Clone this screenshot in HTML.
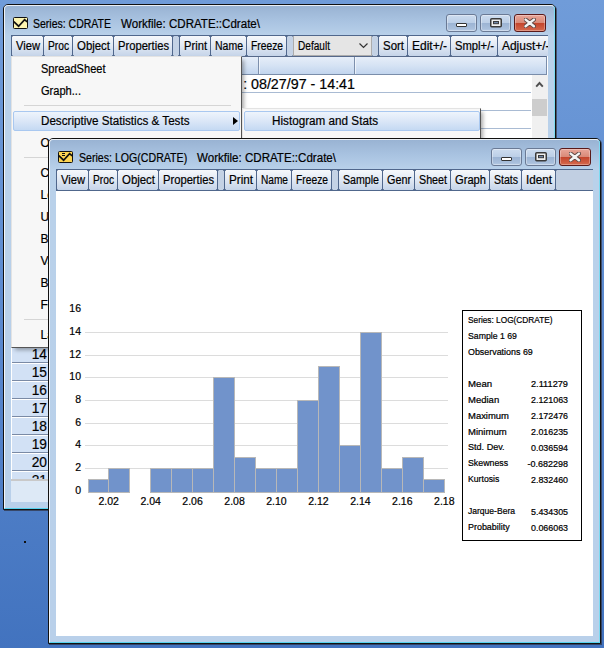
<!DOCTYPE html><html><head><meta charset="utf-8"><style>
*{margin:0;padding:0;box-sizing:border-box}
html,body{width:604px;height:648px;overflow:hidden}
body{position:relative;font-family:"Liberation Sans", sans-serif;background:linear-gradient(180deg,#709cd9 0%,#5f8dd1 40%,#4273bf 100%)}
.t{position:absolute;white-space:pre;font-family:"Liberation Sans", sans-serif;-webkit-text-stroke:0.2px currentColor}
.b{position:absolute}
.win{position:absolute;width:553px;height:506px;border-radius:5px 5px 0 0;border:1px solid #111;box-shadow:1px 1px 0 rgba(40,30,30,.55);
  background:linear-gradient(180deg,#98b2d2 0px,#a9c3e1 16px,#b9d1ea 31px,#b9d0ea 100%)}
.wh{position:absolute;left:0;top:0;width:551px;height:504px;border:1px solid rgba(255,255,255,.8);border-bottom-color:#55d2ef;border-right-color:#7ddbf2;border-radius:4px 4px 0 0}
.tb{position:absolute;height:21px;overflow:hidden;border-top:1px solid #50678c;
  background:linear-gradient(180deg,#f6f8fb 0%,#e3eaf4 45%,#c5d4e9 100%)}
.sep{position:absolute;top:0;height:20px;width:1px;background:#50678c}
.sep:before,.sep:after{content:'';position:absolute;left:-1px;width:3px;height:1px;background:rgba(80,103,140,.55)}
.sep:before{top:0}.sep:after{top:19px}
.gap{position:absolute;top:0;height:21px;background:#c4d2e5}
.btn{position:absolute;width:31px;height:18px;border:1px solid #6a7a95;border-radius:3px;box-shadow:inset 0 0 0 1px rgba(255,255,255,.35);
  background:linear-gradient(180deg,#cddcef 0%,#bccfe7 48%,#9cb4d4 52%,#a9bfdc 85%,#b7cbe5 100%)}
.cls{position:absolute;width:32px;height:18px;border:1px solid #5a1a1a;border-radius:3px;box-shadow:inset 0 0 0 1px rgba(255,255,255,.3);
  background:linear-gradient(180deg,#e9a699 0%,#d98a78 48%,#c4452c 52%,#d56a4f 100%)}
.menu{position:absolute;background:#f7f7f7;border:1px solid #e3e3e3;border-right-color:#555;border-bottom-color:#555;box-shadow:3px 3px 4px -1px rgba(0,0,0,.33)}
.hl{position:absolute;border:1px solid #a9c8f0;border-radius:2px;background:linear-gradient(180deg,#eef4fc 0%,#dbe7f7 50%,#c5d9f3 100%)}
</style></head><body>
<div class="win" style="left:3px;top:4px"><div class="wh"></div></div>
<svg class="b" style="left:13px;top:17px" width="15" height="12" viewBox="0 0 15 12"><rect x="0.5" y="0.5" width="14" height="11" rx="1" fill="#fdf5b0" stroke="#111" stroke-width="1"/><path d="M0.8 4.6 L5.6 9.2 L11.6 2.6 L14.2 4.8" fill="none" stroke="#111" stroke-width="1.7"/></svg>
<div class="t" style="left:33px;top:17.84px;font-size:12px;line-height:12px;color:#000;transform:scaleX(0.8750);transform-origin:0 0;">Series: CDRATE</div>
<div class="t" style="left:120.8px;top:17.84px;font-size:12px;line-height:12px;color:#000;transform:scaleX(0.9635);transform-origin:0 0;">Workfile: CDRATE::Cdrate\</div>
<div class="btn" style="left:446px;top:14px"><div class="b" style="left:9px;top:8px;width:11px;height:4px;background:#fff;border:1px solid #333;border-radius:1px"></div></div>
<div class="btn" style="left:480px;top:14px"><svg class="b" style="left:9px;top:3px" width="12" height="10" viewBox="0 0 12 10"><rect x="0.75" y="0.75" width="10.5" height="8" rx="1" fill="#efefef" stroke="#3a3a3a" stroke-width="1.5"/><rect x="3.5" y="3.5" width="5" height="2.2" fill="#6f86a8" stroke="#3a3a3a" stroke-width="1"/></svg></div>
<div class="cls" style="left:514px;top:14px"><svg class="b" style="left:9px;top:3px" width="12" height="10" viewBox="0 0 12 10"><path d="M1.6 1.6 L9.9 8.2 M9.9 1.6 L1.6 8.2" stroke="#5e4844" stroke-width="4.2" stroke-linecap="round"/><path d="M1.6 1.6 L9.9 8.2 M9.9 1.6 L1.6 8.2" stroke="#f4f4f4" stroke-width="2.4" stroke-linecap="round"/></svg></div>
<div class="tb" style="left:11px;top:35px;width:537px">
<div class="sep" style="left:0px"></div>
<div class="sep" style="left:32px"></div>
<div class="t" style="left:4.5px;top:3.84px;font-size:12px;line-height:12px;color:#000;transform:scaleX(0.9303);transform-origin:0 0;">View</div>
<div class="sep" style="left:32px"></div>
<div class="sep" style="left:61px"></div>
<div class="t" style="left:36.5px;top:3.84px;font-size:12px;line-height:12px;color:#000;transform:scaleX(0.8506);transform-origin:0 0;">Proc</div>
<div class="sep" style="left:61px"></div>
<div class="sep" style="left:102px"></div>
<div class="t" style="left:65.5px;top:3.84px;font-size:12px;line-height:12px;color:#000;transform:scaleX(0.9514);transform-origin:0 0;">Object</div>
<div class="sep" style="left:102px"></div>
<div class="sep" style="left:161px"></div>
<div class="t" style="left:106.5px;top:3.84px;font-size:12px;line-height:12px;color:#000;transform:scaleX(0.9323);transform-origin:0 0;">Properties</div>
<div class="gap" style="left:161px;width:7px"></div>
<div class="sep" style="left:161px"></div>
<div class="sep" style="left:168px"></div>
<div class="sep" style="left:168px"></div>
<div class="sep" style="left:199px"></div>
<div class="t" style="left:172.5px;top:3.84px;font-size:12px;line-height:12px;color:#000;transform:scaleX(0.9316);transform-origin:0 0;">Print</div>
<div class="sep" style="left:199px"></div>
<div class="sep" style="left:235px"></div>
<div class="t" style="left:203.5px;top:3.84px;font-size:12px;line-height:12px;color:#000;transform:scaleX(0.8746);transform-origin:0 0;">Name</div>
<div class="sep" style="left:235px"></div>
<div class="sep" style="left:275px"></div>
<div class="t" style="left:239.5px;top:3.84px;font-size:12px;line-height:12px;color:#000;transform:scaleX(0.8565);transform-origin:0 0;">Freeze</div>
<div class="gap" style="left:275px;width:7px"></div>
<div class="sep" style="left:275px"></div>
<div class="sep" style="left:282px"></div>
<div class="gap" style="left:360px;width:7px"></div>
<div class="sep" style="left:360px"></div>
<div class="sep" style="left:367px"></div>
<div class="sep" style="left:367px"></div>
<div class="sep" style="left:396px"></div>
<div class="t" style="left:371.5px;top:3.84px;font-size:12px;line-height:12px;color:#000;transform:scaleX(0.9539);transform-origin:0 0;">Sort</div>
<div class="sep" style="left:396px"></div>
<div class="sep" style="left:439px"></div>
<div class="t" style="left:400.5px;top:3.84px;font-size:12px;line-height:12px;color:#000;transform:scaleX(0.9996);transform-origin:0 0;">Edit+/-</div>
<div class="sep" style="left:439px"></div>
<div class="sep" style="left:486px"></div>
<div class="t" style="left:443.5px;top:3.84px;font-size:12px;line-height:12px;color:#000;transform:scaleX(0.9355);transform-origin:0 0;">Smpl+/-</div>
<div class="sep" style="left:486px"></div>
<div class="sep" style="left:589px"></div>
<div class="t" style="left:490.5px;top:3.84px;font-size:12px;line-height:12px;color:#000;transform:scaleX(0.9957);transform-origin:0 0;">Adjust+/-</div>
<div class="b" style="left:282px;top:-1px;width:79px;height:21px;background:#e5e5e5;border:1px solid #acacac"></div><div class="t" style="left:286.5px;top:3.5px;font-size:12px;line-height:12px;transform:scaleX(0.84);transform-origin:0 0">Default</div><svg class="b" style="left:348px;top:7px" width="9" height="6" viewBox="0 0 9 6"><path d="M0.5 0.5 L4.5 4.5 L8.5 0.5" fill="none" stroke="#333" stroke-width="1.2"/></svg>
</div>
<div class="b" style="left:11px;top:56px;width:537px;height:446px;background:#fff"></div>
<div class="b" style="left:11px;top:56px;width:537px;height:19px;background:linear-gradient(180deg,#e6eef9 0%,#d6e3f4 50%,#c2d5ee 100%);border-top:1px solid #56698a;border-bottom:1px solid #7a8daa;border-right:1px solid #7a8daa;width:536px"></div>
<div class="b" style="left:258px;top:57px;width:1px;height:17px;background:#7d90ad"></div>
<div class="b" style="left:259px;top:57px;width:1px;height:17px;background:rgba(255,255,255,.6)"></div>
<div class="b" style="left:354px;top:57px;width:1px;height:17px;background:#7d90ad"></div>
<div class="b" style="left:355px;top:57px;width:1px;height:17px;background:rgba(255,255,255,.6)"></div>
<div class="b" style="left:48px;top:92px;width:483px;height:1px;background:#a9bbd3"></div>
<div class="b" style="left:48px;top:110px;width:483px;height:1px;background:#a9bbd3"></div>
<div class="b" style="left:48px;top:128px;width:483px;height:1px;background:#a9bbd3"></div>
<div class="b" style="left:48px;top:146px;width:483px;height:1px;background:#a9bbd3"></div>
<div class="b" style="left:48px;top:164px;width:483px;height:1px;background:#a9bbd3"></div>
<div class="b" style="left:48px;top:182px;width:483px;height:1px;background:#a9bbd3"></div>
<div class="b" style="left:48px;top:200px;width:483px;height:1px;background:#a9bbd3"></div>
<div class="b" style="left:48px;top:218px;width:483px;height:1px;background:#a9bbd3"></div>
<div class="b" style="left:48px;top:236px;width:483px;height:1px;background:#a9bbd3"></div>
<div class="b" style="left:48px;top:254px;width:483px;height:1px;background:#a9bbd3"></div>
<div class="b" style="left:48px;top:272px;width:483px;height:1px;background:#a9bbd3"></div>
<div class="b" style="left:48px;top:290px;width:483px;height:1px;background:#a9bbd3"></div>
<div class="b" style="left:48px;top:308px;width:483px;height:1px;background:#a9bbd3"></div>
<div class="b" style="left:48px;top:326px;width:483px;height:1px;background:#a9bbd3"></div>
<div class="b" style="left:48px;top:344px;width:483px;height:1px;background:#a9bbd3"></div>
<div class="b" style="left:48px;top:362px;width:483px;height:1px;background:#a9bbd3"></div>
<div class="b" style="left:48px;top:380px;width:483px;height:1px;background:#a9bbd3"></div>
<div class="b" style="left:48px;top:398px;width:483px;height:1px;background:#a9bbd3"></div>
<div class="b" style="left:48px;top:416px;width:483px;height:1px;background:#a9bbd3"></div>
<div class="b" style="left:48px;top:434px;width:483px;height:1px;background:#a9bbd3"></div>
<div class="b" style="left:48px;top:452px;width:483px;height:1px;background:#a9bbd3"></div>
<div class="b" style="left:48px;top:470px;width:483px;height:1px;background:#a9bbd3"></div>
<div class="b" style="left:532px;top:75px;width:16px;height:427px;background:#f0f0f0"></div>
<svg class="b" style="left:535px;top:80px" width="9" height="8" viewBox="0 0 9 8"><path d="M1.2 6.6 L4.5 3 L7.8 6.6" fill="none" stroke="#505050" stroke-width="1.9"/></svg>
<div class="b" style="left:532px;top:99px;width:15px;height:17px;background:#cdcdcd"></div>
<div class="b" style="left:11px;top:344px;width:37px;height:136px;background:#d2e1f5;border-left:1px solid #fff"></div>
<div class="b" style="left:12px;top:344px;width:36px;height:1px;background:#7a8aa5"></div>
<div class="b" style="left:12px;top:345px;width:36px;height:1px;background:#fff"></div>
<div class="t" style="left:10.5px;width:36px;text-align:right;top:345.70px;font-size:15px;line-height:15px;color:#000;transform:scaleX(0.9169);transform-origin:0 0;transform-origin:100% 0;">14</div>
<div class="b" style="left:12px;top:362px;width:36px;height:1px;background:#7a8aa5"></div>
<div class="b" style="left:12px;top:363px;width:36px;height:1px;background:#fff"></div>
<div class="t" style="left:10.5px;width:36px;text-align:right;top:363.70px;font-size:15px;line-height:15px;color:#000;transform:scaleX(0.9169);transform-origin:0 0;transform-origin:100% 0;">15</div>
<div class="b" style="left:12px;top:380px;width:36px;height:1px;background:#7a8aa5"></div>
<div class="b" style="left:12px;top:381px;width:36px;height:1px;background:#fff"></div>
<div class="t" style="left:10.5px;width:36px;text-align:right;top:381.70px;font-size:15px;line-height:15px;color:#000;transform:scaleX(0.9169);transform-origin:0 0;transform-origin:100% 0;">16</div>
<div class="b" style="left:12px;top:398px;width:36px;height:1px;background:#7a8aa5"></div>
<div class="b" style="left:12px;top:399px;width:36px;height:1px;background:#fff"></div>
<div class="t" style="left:10.5px;width:36px;text-align:right;top:399.70px;font-size:15px;line-height:15px;color:#000;transform:scaleX(0.9169);transform-origin:0 0;transform-origin:100% 0;">17</div>
<div class="b" style="left:12px;top:416px;width:36px;height:1px;background:#7a8aa5"></div>
<div class="b" style="left:12px;top:417px;width:36px;height:1px;background:#fff"></div>
<div class="t" style="left:10.5px;width:36px;text-align:right;top:417.70px;font-size:15px;line-height:15px;color:#000;transform:scaleX(0.9169);transform-origin:0 0;transform-origin:100% 0;">18</div>
<div class="b" style="left:12px;top:434px;width:36px;height:1px;background:#7a8aa5"></div>
<div class="b" style="left:12px;top:435px;width:36px;height:1px;background:#fff"></div>
<div class="t" style="left:10.5px;width:36px;text-align:right;top:435.70px;font-size:15px;line-height:15px;color:#000;transform:scaleX(0.9169);transform-origin:0 0;transform-origin:100% 0;">19</div>
<div class="b" style="left:12px;top:452px;width:36px;height:1px;background:#7a8aa5"></div>
<div class="b" style="left:12px;top:453px;width:36px;height:1px;background:#fff"></div>
<div class="t" style="left:10.5px;width:36px;text-align:right;top:453.70px;font-size:15px;line-height:15px;color:#000;transform:scaleX(0.9169);transform-origin:0 0;transform-origin:100% 0;">20</div>
<div class="b" style="left:12px;top:470px;width:36px;height:1px;background:#7a8aa5"></div>
<div class="b" style="left:12px;top:471px;width:36px;height:1px;background:#fff"></div>
<div class="t" style="left:10.5px;width:36px;text-align:right;top:471.70px;font-size:15px;line-height:15px;color:#000;transform:scaleX(0.9169);transform-origin:0 0;transform-origin:100% 0;">21</div>
<div class="b" style="left:11px;top:479px;width:37px;height:2px;background:#c9c9c9"></div>
<div class="b" style="left:11px;top:481px;width:37px;height:21px;background:#dde9f6"></div>
<div class="t" style="left:243.2px;top:76.85px;font-size:14px;line-height:14px;color:#000;">:</div>
<div class="t" style="left:250.8px;top:76.85px;font-size:14px;line-height:14px;color:#000;transform:scaleX(1.0198);transform-origin:0 0;">08/27/97 - 14:41</div>
<div class="b" style="left:24px;top:541px;width:2px;height:2px;background:#111"></div>
<div class="menu" style="left:11px;top:56px;width:231px;height:292px;"></div>
<div class="b" style="left:24px;top:105px;width:207px;height:1px;background:#d5d5d5"></div>
<div class="b" style="left:24px;top:157px;width:207px;height:1px;background:#d5d5d5"></div>
<div class="b" style="left:24px;top:319px;width:207px;height:1px;background:#d5d5d5"></div>
<div class="b" style="left:13px;top:111px;width:227px;height:20px;"></div>
<div class="hl" style="left:13px;top:111px;width:227px;height:20px"></div>
<div class="t" style="left:40.5px;top:62.84px;font-size:12px;line-height:12px;color:#000;transform:scaleX(0.9206);transform-origin:0 0;">SpreadSheet</div>
<div class="t" style="left:40.5px;top:84.84px;font-size:12px;line-height:12px;color:#000;transform:scaleX(0.9225);transform-origin:0 0;">Graph...</div>
<div class="t" style="left:40.5px;top:114.84px;font-size:12px;line-height:12px;color:#000;transform:scaleX(0.9695);transform-origin:0 0;">Descriptive Statistics &amp; Tests</div>
<div class="t" style="left:40.5px;top:136.84px;font-size:12px;line-height:12px;color:#000;">One-Way Tabulation...</div>
<div class="t" style="left:40.5px;top:166.84px;font-size:12px;line-height:12px;color:#000;">Correlogram...</div>
<div class="t" style="left:40.5px;top:188.84px;font-size:12px;line-height:12px;color:#000;">Long-run Variance...</div>
<div class="t" style="left:40.5px;top:210.84px;font-size:12px;line-height:12px;color:#000;">Unit Root Test...</div>
<div class="t" style="left:40.5px;top:232.84px;font-size:12px;line-height:12px;color:#000;">Breakpoint Unit Root Test...</div>
<div class="t" style="left:40.5px;top:254.84px;font-size:12px;line-height:12px;color:#000;">Variance Ratio Test...</div>
<div class="t" style="left:40.5px;top:276.84px;font-size:12px;line-height:12px;color:#000;">BDS Independence Test...</div>
<div class="t" style="left:40.5px;top:298.84px;font-size:12px;line-height:12px;color:#000;">Forecast Evaluation...</div>
<div class="t" style="left:40.5px;top:328.84px;font-size:12px;line-height:12px;color:#000;">Label</div>
<svg class="b" style="left:233px;top:117px" width="5" height="8" viewBox="0 0 5 8"><path d="M0 0 L5 4 L0 8Z" fill="#000"/></svg>
<div class="menu" style="left:242px;top:108px;width:239px;height:60px;"></div>
<div class="hl" style="left:244px;top:111px;width:236px;height:20px"></div>
<div class="t" style="left:271.5px;top:114.84px;font-size:12px;line-height:12px;color:#000;transform:scaleX(0.9750);transform-origin:0 0;">Histogram and Stats</div>
<div class="win" style="left:48px;top:138px"><div class="wh"></div></div>
<svg class="b" style="left:58px;top:151px" width="15" height="12" viewBox="0 0 15 12"><rect x="0.5" y="0.5" width="14" height="11" rx="1" fill="#fcd452" stroke="#111" stroke-width="1"/><path d="M0.8 4.6 L5.6 9.2 L11.6 2.6 L14.2 4.8" fill="none" stroke="#111" stroke-width="1.7"/><path d="M4 2.5 H7 M4 4.5 H7" stroke="#111" stroke-width="1"/></svg>
<div class="t" style="left:78.8px;top:151.84px;font-size:12px;line-height:12px;color:#000;transform:scaleX(0.8835);transform-origin:0 0;">Series: LOG(CDRATE)</div>
<div class="t" style="left:197px;top:151.84px;font-size:12px;line-height:12px;color:#000;transform:scaleX(0.9635);transform-origin:0 0;">Workfile: CDRATE::Cdrate\</div>
<div class="btn" style="left:491px;top:148px"><div class="b" style="left:9px;top:8px;width:11px;height:4px;background:#fff;border:1px solid #333;border-radius:1px"></div></div>
<div class="btn" style="left:525px;top:148px"><svg class="b" style="left:9px;top:3px" width="12" height="10" viewBox="0 0 12 10"><rect x="0.75" y="0.75" width="10.5" height="8" rx="1" fill="#efefef" stroke="#3a3a3a" stroke-width="1.5"/><rect x="3.5" y="3.5" width="5" height="2.2" fill="#6f86a8" stroke="#3a3a3a" stroke-width="1"/></svg></div>
<div class="cls" style="left:559px;top:148px"><svg class="b" style="left:9px;top:3px" width="12" height="10" viewBox="0 0 12 10"><path d="M1.6 1.6 L9.9 8.2 M9.9 1.6 L1.6 8.2" stroke="#5e4844" stroke-width="4.2" stroke-linecap="round"/><path d="M1.6 1.6 L9.9 8.2 M9.9 1.6 L1.6 8.2" stroke="#f4f4f4" stroke-width="2.4" stroke-linecap="round"/></svg></div>
<div class="tb" style="left:56px;top:169px;width:537px">
<div class="sep" style="left:0px"></div>
<div class="sep" style="left:32px"></div>
<div class="t" style="left:4.5px;top:3.84px;font-size:12px;line-height:12px;color:#000;transform:scaleX(0.9303);transform-origin:0 0;">View</div>
<div class="sep" style="left:32px"></div>
<div class="sep" style="left:61px"></div>
<div class="t" style="left:36.5px;top:3.84px;font-size:12px;line-height:12px;color:#000;transform:scaleX(0.8506);transform-origin:0 0;">Proc</div>
<div class="sep" style="left:61px"></div>
<div class="sep" style="left:102px"></div>
<div class="t" style="left:65.5px;top:3.84px;font-size:12px;line-height:12px;color:#000;transform:scaleX(0.9514);transform-origin:0 0;">Object</div>
<div class="sep" style="left:102px"></div>
<div class="sep" style="left:161px"></div>
<div class="t" style="left:106.5px;top:3.84px;font-size:12px;line-height:12px;color:#000;transform:scaleX(0.9323);transform-origin:0 0;">Properties</div>
<div class="gap" style="left:161px;width:7px"></div>
<div class="sep" style="left:161px"></div>
<div class="sep" style="left:168px"></div>
<div class="sep" style="left:168px"></div>
<div class="sep" style="left:200px"></div>
<div class="t" style="left:172.5px;top:3.84px;font-size:12px;line-height:12px;color:#000;transform:scaleX(0.9722);transform-origin:0 0;">Print</div>
<div class="sep" style="left:200px"></div>
<div class="sep" style="left:235px"></div>
<div class="t" style="left:204.5px;top:3.84px;font-size:12px;line-height:12px;color:#000;transform:scaleX(0.8433);transform-origin:0 0;">Name</div>
<div class="sep" style="left:235px"></div>
<div class="sep" style="left:275px"></div>
<div class="t" style="left:239.5px;top:3.84px;font-size:12px;line-height:12px;color:#000;transform:scaleX(0.8565);transform-origin:0 0;">Freeze</div>
<div class="gap" style="left:275px;width:7px"></div>
<div class="sep" style="left:275px"></div>
<div class="sep" style="left:282px"></div>
<div class="sep" style="left:282px"></div>
<div class="sep" style="left:326px"></div>
<div class="t" style="left:286.5px;top:3.84px;font-size:12px;line-height:12px;color:#000;transform:scaleX(0.8848);transform-origin:0 0;">Sample</div>
<div class="sep" style="left:326px"></div>
<div class="sep" style="left:358px"></div>
<div class="t" style="left:330.5px;top:3.84px;font-size:12px;line-height:12px;color:#000;transform:scaleX(0.8993);transform-origin:0 0;">Genr</div>
<div class="sep" style="left:358px"></div>
<div class="sep" style="left:394px"></div>
<div class="t" style="left:362.5px;top:3.84px;font-size:12px;line-height:12px;color:#000;transform:scaleX(0.8929);transform-origin:0 0;">Sheet</div>
<div class="sep" style="left:394px"></div>
<div class="sep" style="left:433px"></div>
<div class="t" style="left:398.5px;top:3.84px;font-size:12px;line-height:12px;color:#000;transform:scaleX(0.9293);transform-origin:0 0;">Graph</div>
<div class="sep" style="left:433px"></div>
<div class="sep" style="left:465px"></div>
<div class="t" style="left:437.5px;top:3.84px;font-size:12px;line-height:12px;color:#000;transform:scaleX(0.8772);transform-origin:0 0;">Stats</div>
<div class="sep" style="left:465px"></div>
<div class="sep" style="left:499px"></div>
<div class="t" style="left:469.5px;top:3.84px;font-size:12px;line-height:12px;color:#000;transform:scaleX(0.9737);transform-origin:0 0;">Ident</div>
<div class="gap" style="left:500px;width:40px;background:#c1cfe2"></div><div class="sep" style="left:499px"></div>
</div>
<div class="b" style="left:56px;top:190px;width:537px;height:1px;background:#50678c"></div>
<div class="b" style="left:56px;top:191px;width:537px;height:445px;background:#fff"></div>
<div class="b" style="left:85px;top:468px;width:363px;height:1px;background:#dcdcdc"></div>
<div class="b" style="left:85px;top:445px;width:363px;height:1px;background:#dcdcdc"></div>
<div class="b" style="left:85px;top:423px;width:363px;height:1px;background:#dcdcdc"></div>
<div class="b" style="left:85px;top:400px;width:363px;height:1px;background:#dcdcdc"></div>
<div class="b" style="left:85px;top:377px;width:363px;height:1px;background:#dcdcdc"></div>
<div class="b" style="left:85px;top:355px;width:363px;height:1px;background:#dcdcdc"></div>
<div class="b" style="left:85px;top:332px;width:363px;height:1px;background:#dcdcdc"></div>
<div class="t" style="left:51px;width:30px;text-align:right;top:484.51px;font-size:10.5px;line-height:10.5px;color:#000;transform-origin:100% 0;">0</div>
<div class="t" style="left:51px;width:30px;text-align:right;top:461.85px;font-size:10.5px;line-height:10.5px;color:#000;transform-origin:100% 0;">2</div>
<div class="t" style="left:51px;width:30px;text-align:right;top:439.19px;font-size:10.5px;line-height:10.5px;color:#000;transform-origin:100% 0;">4</div>
<div class="t" style="left:51px;width:30px;text-align:right;top:416.53px;font-size:10.5px;line-height:10.5px;color:#000;transform-origin:100% 0;">6</div>
<div class="t" style="left:51px;width:30px;text-align:right;top:393.87px;font-size:10.5px;line-height:10.5px;color:#000;transform-origin:100% 0;">8</div>
<div class="t" style="left:51px;width:30px;text-align:right;top:371.21px;font-size:10.5px;line-height:10.5px;color:#000;transform-origin:100% 0;">10</div>
<div class="t" style="left:51px;width:30px;text-align:right;top:348.55px;font-size:10.5px;line-height:10.5px;color:#000;transform-origin:100% 0;">12</div>
<div class="t" style="left:51px;width:30px;text-align:right;top:325.89px;font-size:10.5px;line-height:10.5px;color:#000;transform-origin:100% 0;">14</div>
<div class="t" style="left:51px;width:30px;text-align:right;top:303.23px;font-size:10.5px;line-height:10.5px;color:#000;transform-origin:100% 0;">16</div>
<div class="b" style="left:88px;top:479px;width:21px;height:14px;background:#7193cb;border:1px solid #b8b8b8"></div>
<div class="b" style="left:108px;top:468px;width:22px;height:25px;background:#7193cb;border:1px solid #b8b8b8"></div>
<div class="b" style="left:150px;top:468px;width:22px;height:25px;background:#7193cb;border:1px solid #b8b8b8"></div>
<div class="b" style="left:171px;top:468px;width:22px;height:25px;background:#7193cb;border:1px solid #b8b8b8"></div>
<div class="b" style="left:192px;top:468px;width:22px;height:25px;background:#7193cb;border:1px solid #b8b8b8"></div>
<div class="b" style="left:213px;top:377px;width:22px;height:116px;background:#7193cb;border:1px solid #b8b8b8"></div>
<div class="b" style="left:234px;top:457px;width:22px;height:36px;background:#7193cb;border:1px solid #b8b8b8"></div>
<div class="b" style="left:255px;top:468px;width:22px;height:25px;background:#7193cb;border:1px solid #b8b8b8"></div>
<div class="b" style="left:276px;top:468px;width:22px;height:25px;background:#7193cb;border:1px solid #b8b8b8"></div>
<div class="b" style="left:297px;top:400px;width:22px;height:93px;background:#7193cb;border:1px solid #b8b8b8"></div>
<div class="b" style="left:318px;top:366px;width:22px;height:127px;background:#7193cb;border:1px solid #b8b8b8"></div>
<div class="b" style="left:339px;top:445px;width:22px;height:48px;background:#7193cb;border:1px solid #b8b8b8"></div>
<div class="b" style="left:360px;top:332px;width:22px;height:161px;background:#7193cb;border:1px solid #b8b8b8"></div>
<div class="b" style="left:381px;top:468px;width:22px;height:25px;background:#7193cb;border:1px solid #b8b8b8"></div>
<div class="b" style="left:402px;top:457px;width:22px;height:36px;background:#7193cb;border:1px solid #b8b8b8"></div>
<div class="b" style="left:423px;top:479px;width:22px;height:14px;background:#7193cb;border:1px solid #b8b8b8"></div>
<div class="t" style="left:88.67500000000001px;width:40px;text-align:center;top:495.71px;font-size:10.5px;line-height:10.5px;color:#000;transform-origin:50% 0;">2.02</div>
<div class="t" style="left:130.625px;width:40px;text-align:center;top:495.71px;font-size:10.5px;line-height:10.5px;color:#000;transform-origin:50% 0;">2.04</div>
<div class="t" style="left:172.575px;width:40px;text-align:center;top:495.71px;font-size:10.5px;line-height:10.5px;color:#000;transform-origin:50% 0;">2.06</div>
<div class="t" style="left:214.52500000000003px;width:40px;text-align:center;top:495.71px;font-size:10.5px;line-height:10.5px;color:#000;transform-origin:50% 0;">2.08</div>
<div class="t" style="left:256.475px;width:40px;text-align:center;top:495.71px;font-size:10.5px;line-height:10.5px;color:#000;transform-origin:50% 0;">2.10</div>
<div class="t" style="left:298.425px;width:40px;text-align:center;top:495.71px;font-size:10.5px;line-height:10.5px;color:#000;transform-origin:50% 0;">2.12</div>
<div class="t" style="left:340.375px;width:40px;text-align:center;top:495.71px;font-size:10.5px;line-height:10.5px;color:#000;transform-origin:50% 0;">2.14</div>
<div class="t" style="left:382.325px;width:40px;text-align:center;top:495.71px;font-size:10.5px;line-height:10.5px;color:#000;transform-origin:50% 0;">2.16</div>
<div class="t" style="left:424.27500000000003px;width:40px;text-align:center;top:495.71px;font-size:10.5px;line-height:10.5px;color:#000;transform-origin:50% 0;">2.18</div>
<div class="b" style="left:462px;top:310px;width:120px;height:231px;border:1px solid #000;background:#fff"></div>
<div class="t" style="left:468.3px;top:316.00px;font-size:8.5px;line-height:8.5px;color:#000;transform:scaleX(0.9752);transform-origin:0 0;">Series: LOG(CDRATE)</div>
<div class="t" style="left:468.3px;top:331.93px;font-size:8.5px;line-height:8.5px;color:#000;transform:scaleX(1.0244);transform-origin:0 0;">Sample 1 69</div>
<div class="t" style="left:468.3px;top:347.86px;font-size:8.5px;line-height:8.5px;color:#000;transform:scaleX(1.0467);transform-origin:0 0;">Observations 69</div>
<div class="t" style="left:468.3px;top:379.72px;font-size:8.5px;line-height:8.5px;color:#000;transform:scaleX(1.1333);transform-origin:0 0;">Mean</div>
<div class="t" style="left:508.29999999999995px;width:60px;text-align:right;top:380.22px;font-size:8.5px;line-height:8.5px;color:#000;transform:scaleX(1.0818);transform-origin:0 0;transform-origin:100% 0;">2.111279</div>
<div class="t" style="left:468.3px;top:395.65px;font-size:8.5px;line-height:8.5px;color:#000;transform:scaleX(1.1187);transform-origin:0 0;">Median</div>
<div class="t" style="left:508.29999999999995px;width:60px;text-align:right;top:396.15px;font-size:8.5px;line-height:8.5px;color:#000;transform:scaleX(1.0436);transform-origin:0 0;transform-origin:100% 0;">2.121063</div>
<div class="t" style="left:468.3px;top:411.58px;font-size:8.5px;line-height:8.5px;color:#000;transform:scaleX(1.1128);transform-origin:0 0;">Maximum</div>
<div class="t" style="left:508.29999999999995px;width:60px;text-align:right;top:412.08px;font-size:8.5px;line-height:8.5px;color:#000;transform:scaleX(1.0436);transform-origin:0 0;transform-origin:100% 0;">2.172476</div>
<div class="t" style="left:468.3px;top:427.51px;font-size:8.5px;line-height:8.5px;color:#000;transform:scaleX(1.1222);transform-origin:0 0;">Minimum</div>
<div class="t" style="left:508.29999999999995px;width:60px;text-align:right;top:428.01px;font-size:8.5px;line-height:8.5px;color:#000;transform:scaleX(1.0436);transform-origin:0 0;transform-origin:100% 0;">2.016235</div>
<div class="t" style="left:468.3px;top:443.44px;font-size:8.5px;line-height:8.5px;color:#000;transform:scaleX(1.0662);transform-origin:0 0;">Std. Dev.</div>
<div class="t" style="left:508.29999999999995px;width:60px;text-align:right;top:443.94px;font-size:8.5px;line-height:8.5px;color:#000;transform:scaleX(1.0436);transform-origin:0 0;transform-origin:100% 0;">0.036594</div>
<div class="t" style="left:468.3px;top:459.37px;font-size:8.5px;line-height:8.5px;color:#000;transform:scaleX(1.0348);transform-origin:0 0;">Skewness</div>
<div class="t" style="left:508.29999999999995px;width:60px;text-align:right;top:459.87px;font-size:8.5px;line-height:8.5px;color:#000;transform:scaleX(1.0575);transform-origin:0 0;transform-origin:100% 0;">-0.682298</div>
<div class="t" style="left:468.3px;top:475.30px;font-size:8.5px;line-height:8.5px;color:#000;transform:scaleX(1.0189);transform-origin:0 0;">Kurtosis</div>
<div class="t" style="left:508.29999999999995px;width:60px;text-align:right;top:475.80px;font-size:8.5px;line-height:8.5px;color:#000;transform:scaleX(1.0436);transform-origin:0 0;transform-origin:100% 0;">2.832460</div>
<div class="t" style="left:468.3px;top:507.16px;font-size:8.5px;line-height:8.5px;color:#000;transform:scaleX(1.0047);transform-origin:0 0;">Jarque-Bera</div>
<div class="t" style="left:508.29999999999995px;width:60px;text-align:right;top:507.66px;font-size:8.5px;line-height:8.5px;color:#000;transform:scaleX(1.0436);transform-origin:0 0;transform-origin:100% 0;">5.434305</div>
<div class="t" style="left:468.3px;top:523.09px;font-size:8.5px;line-height:8.5px;color:#000;transform:scaleX(1.0507);transform-origin:0 0;">Probability</div>
<div class="t" style="left:508.29999999999995px;width:60px;text-align:right;top:523.59px;font-size:8.5px;line-height:8.5px;color:#000;transform:scaleX(1.0436);transform-origin:0 0;transform-origin:100% 0;">0.066063</div>
</body></html>
